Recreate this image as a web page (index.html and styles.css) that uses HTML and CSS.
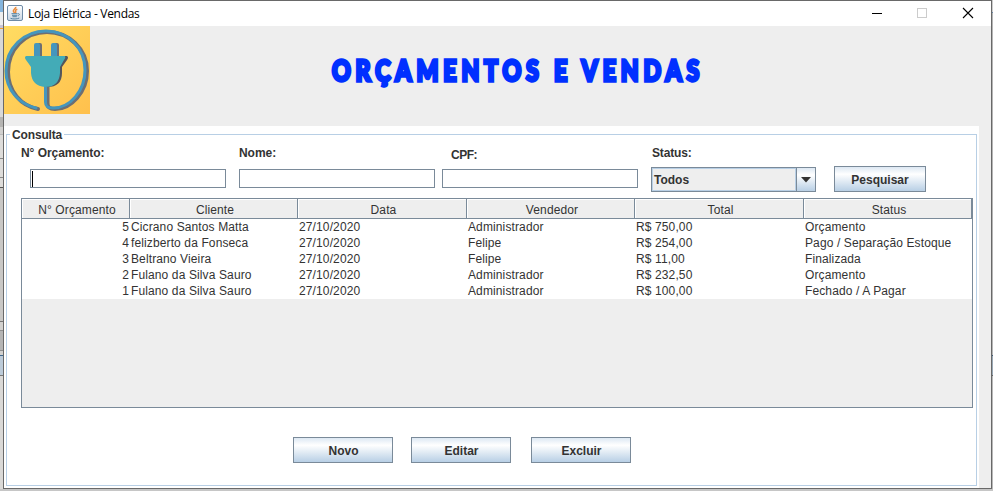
FILE: index.html
```html
<!DOCTYPE html>
<html lang="pt-BR">
<head>
<meta charset="utf-8">
<title>Loja Elétrica - Vendas</title>
<link rel="stylesheet" href="styles.css">
</head>
<body>
<main class="window">
  <div class="titlebar">
    <svg class="java" width="16" height="16" viewBox="0 0 16 16">
      <defs><linearGradient id="jg" x1="0" y1="0" x2="0" y2="1"><stop offset="0" stop-color="#fff"/><stop offset="1" stop-color="#c9d6e3"/></linearGradient></defs>
      <rect x=".5" y=".5" width="15" height="15" rx="1.5" fill="url(#jg)" stroke="#6f8ba6"/>
      <path d="M8.800 1.800C9.200 3.600 6 4.300 6.300 6C6.400 6.700 7.300 7.300 7.500 8.200M10.300 4.200C8.200 5 8 5.600 8.700 6.400C9 7 8.700 7.500 8.300 8" fill="none" stroke="#e8893a" stroke-width="1.500"/>
      <path d="M4.500 8.700H10.500M5 10.300H10.300M5.500 11.700H9.800M3.500 13.300C6 14.300 10 14.200 12.300 13M10.800 8.800C13 8.200 12.800 10.400 10.800 10.900" fill="none" stroke="#5382a1" stroke-width="1"/>
    </svg>
    <span class="caption">Loja Elétrica - Vendas</span>
    <svg class="controls" width="115" height="25" viewBox="0 0 115 25" shape-rendering="crispEdges">
      <path d="M0 12.500H10" stroke="#000"/>
      <rect x="45.500" y="7.500" width="9" height="9" fill="none" stroke="#ccc"/>
      <path d="M91 7L101 17M101 7L91 17" stroke="#000" stroke-width="1.100" shape-rendering="auto"/>
    </svg>
  </div>
  <header class="banner">
    <svg class="logo" width="86" height="88" viewBox="0 0 86 88">
      <defs><linearGradient id="lg" x1="0" y1="0" x2="1" y2="1"><stop offset="0" stop-color="#ffdc62"/><stop offset="1" stop-color="#ffc04d"/></linearGradient></defs>
      <rect width="86" height="88" fill="url(#lg)"/>
      <g fill="none" stroke-linecap="round">
        <path d="M34 83C17 80 4 65 4 46C4 23 21 6 43 6C65 6 83 23 83 45C83 66 67 83 51 83C45 83 43.500 81 43.500 77V59" stroke="#6d6e73" stroke-width="4"/>
        <path d="M32 82C15 78 2 64 2 45C2 22 20 5 42 5C64 5 81 22 81 44C81 65 66 82 49 82C43 82 41.500 80 41.500 76V59" stroke="#4596bd" stroke-width="3"/>
      </g>
      <path d="M32 17H36Q38 17 38 19V32H32ZM50 17H53Q55 17 55 19V32H50Z" fill="#6d6e73"/>
      <path d="M30 32V19Q30 17 32 17H34Q36 17 36 19V32ZM47 32V19Q47 17 49 17H51Q53 17 53 19V32Z" fill="#4596bd"/>
      <path d="M25 30H63Q65 31 63 34L58 41V47Q58 61 43 61Q31 59 29 48V41Z" fill="#55565b"/>
      <path d="M22 30H61Q62 32 60 34L56 41V47Q55 61 41 61Q28 60 27 47V41Q25 38 22 34Q20 31 22 30Z" fill="#43abb7"/>
    </svg>
    <h1><span>ORÇAMENTOS E VENDAS</span></h1>
  </header>
  <div class="content">
    <fieldset>
      <legend>Consulta</legend>
      <div class="filters">
        <div class="field f1"><label>N° Orçamento:</label><div class="input"><i class="caret"></i></div></div>
        <div class="field f2"><label>Nome:</label><div class="input"></div></div>
        <div class="field f3"><label>CPF:</label><div class="input"></div></div>
        <div class="field f4"><label>Status:</label>
          <div class="combo"><span>Todos</span><b><svg width="18" height="23" viewBox="0 0 18 23"><path d="M4 9H14L9 14.500Z" fill="#333"/></svg></b></div>
        </div>
        <button class="search">Pesquisar</button>
      </div>
      <div class="grid">
        <table>
          <colgroup><col class="c1"><col class="c2"><col class="c3"><col class="c2"><col class="c3"><col class="c2"></colgroup>
          <thead><tr><th>N° Orçamento</th><th>Cliente</th><th>Data</th><th>Vendedor</th><th>Total</th><th>Status</th></tr></thead>
          <tbody>
            <tr><td>5</td><td>Cicrano Santos Matta</td><td>27/10/2020</td><td>Administrador</td><td>R$ 750,00</td><td>Orçamento</td></tr>
            <tr><td>4</td><td>felizberto da Fonseca</td><td>27/10/2020</td><td>Felipe</td><td>R$ 254,00</td><td>Pago / Separação Estoque</td></tr>
            <tr><td>3</td><td>Beltrano Vieira</td><td>27/10/2020</td><td>Felipe</td><td>R$ 11,00</td><td>Finalizada</td></tr>
            <tr><td>2</td><td>Fulano da Silva Sauro</td><td>27/10/2020</td><td>Administrador</td><td>R$ 232,50</td><td>Orçamento</td></tr>
            <tr><td>1</td><td>Fulano da Silva Sauro</td><td>27/10/2020</td><td>Administrador</td><td>R$ 100,00</td><td>Fechado / A Pagar</td></tr>
          </tbody>
        </table>
      </div>
      <div class="actions"><button>Novo</button><button>Editar</button><button>Excluir</button></div>
    </fieldset>
  </div>
</main>
</body>
</html>
```
FILE: styles.css
```css
* { box-sizing: border-box; }
body {
  margin: 0; width: 993px; height: 491px; overflow: hidden; padding-left: 3px;
  background:
    linear-gradient(#85b5dd 0 12px, #eee 12px 25px, #c8c4d8 25px 28px, #f0a030 28px 29px, #d8d8d8 29px 117px, #b5b4b2 117px 127px, #d2d1cf 127px 134px, #bbb 134px 135px, #dddcda 135px 158px, #888 158px 159px, #dddcda 159px 177px, #888 177px 178px, #dddcda 178px 187px, #555 187px 188px, #c9c8c6 188px 321px, #777 321px 322px, #d2d1cf 322px 330px, #8f8f8f 330px 331px, #b5b5b5 331px 350px, #8f8f8f 350px 351px, #d2d1cf 351px 355px, #3f678c 355px 356px, #bccbd9 356px 375px, #777 375px 376px, #dad9d7 376px) 0 0 / 3px 489px no-repeat,
    linear-gradient(#ccc 0 12px, #6785a5 12px 13px, #b5b5b5 13px 355px, #3f5c78 355px 356px, #99a8b5 356px 375px, #666 375px 376px, #b8b8b8 376px) 992px 0 / 1px 489px no-repeat,
    #c6c6c6;
  font: 12px "Liberation Sans", Arial, sans-serif; color: #333;
}
.window { width: 989px; height: 489px; border: 1px solid #696969; background: #eee; }
.titlebar { height: 25px; background: #fff; display: flex; align-items: center; padding: 0 4px 0 3px; }
.java { margin-top: -1px; }
.caption { font: 12px "Open Sans", "Noto Sans", sans-serif; color: #000; margin-left: 5px; letter-spacing: -.32px; }
.controls { margin-left: auto; }
.banner { height: 100px; display: flex; }
.logo { display: block; flex: none; }
h1 { margin: 0; padding: 23px 0 0 242px; line-height: 42px; font-family: Lato, sans-serif; font-weight: 900; font-size: 29px; color: #0030ff; white-space: nowrap; letter-spacing: 6.1px; }
h1 span { display: inline-block; transform: scaleX(.797); transform-origin: 0 50%; -webkit-text-stroke: 3.4px #0030ff; }
.content { width: 975px; height: 362px; background: #fff; padding: 2px; }
fieldset { margin: 0; padding: 0 0 0 14px; height: 358px; min-width: 0; border: 1px solid #b8cfe5; width: 971px; }
legend { font-weight: bold; padding: 0 2px; margin-left: -11px; height: 13px; line-height: 14px; letter-spacing: -.15px; }
.filters { display: flex; height: 57px; padding-top: 1px; align-items: flex-start; font-weight: bold; }
.field label { display: block; height: 14px; line-height: 14px; margin-top: 4px; letter-spacing: -.05px; }
.f1 { width: 218px; }
.f2 { width: 203px; }
.f3 { width: 209px; }
.f4 { width: 183px; }
.field.f3 label { margin: 6px 0 -2px 9px; letter-spacing: -.5px; }
.input { width: 196px; height: 19px; margin-top: 9px; border: 1px solid #7a8a99; padding: 1px; }
.f1 .input { margin-left: 9px; }
.field.f4 label { letter-spacing: -.15px; padding-left: 1px; }
.caret { display: block; width: 1px; height: 16px; background: #000; }
.combo { width: 165px; height: 25px; margin-top: 7px; border: 1px solid #7a8a99; display: flex; background: #eee; }
.combo span { flex: 1; line-height: 22px; border: 1px solid #b8cfe5; padding-left: 1px; }
.combo b { width: 19px; border-left: 1px solid #7a8a99; }
.combo b, button { background: linear-gradient(#dde8f3, #fff 30%, #b8cfe5); }
.combo svg { display: block; }
button { height: 26px; padding: 1px 0 0; border: 1px solid #7a8a99; color: #333; font: bold 12px "Liberation Sans", Arial, sans-serif; }
.search { width: 92px; margin-top: 24px; }
.grid { width: 952px; height: 210px; border: 1px solid #7a8a99; background: #eee; }
table { border-collapse: separate; border-spacing: 0; table-layout: fixed; width: 950px; letter-spacing: .12px; }
.c1 { width: 108px; }
.c2 { width: 168px; }
.c3 { width: 169px; }
th { height: 20px; padding: 3px 0 0 3px; font-weight: normal; border-right: 1px solid #7a8a99; border-bottom: 1px solid #7a8a99; box-shadow: inset 1px 1px #fff; line-height: 16px; }
td { height: 16px; line-height: 16px; padding: 0 1px; background: #fff; white-space: nowrap; }
td:first-child { text-align: right; padding-right: 1px; }
.actions { display: flex; gap: 18px; padding: 29px 0 0 272px; }
.actions button { width: 100px; padding-left: 1px; }
.actions button:last-child { margin-left: 2px; }
```
